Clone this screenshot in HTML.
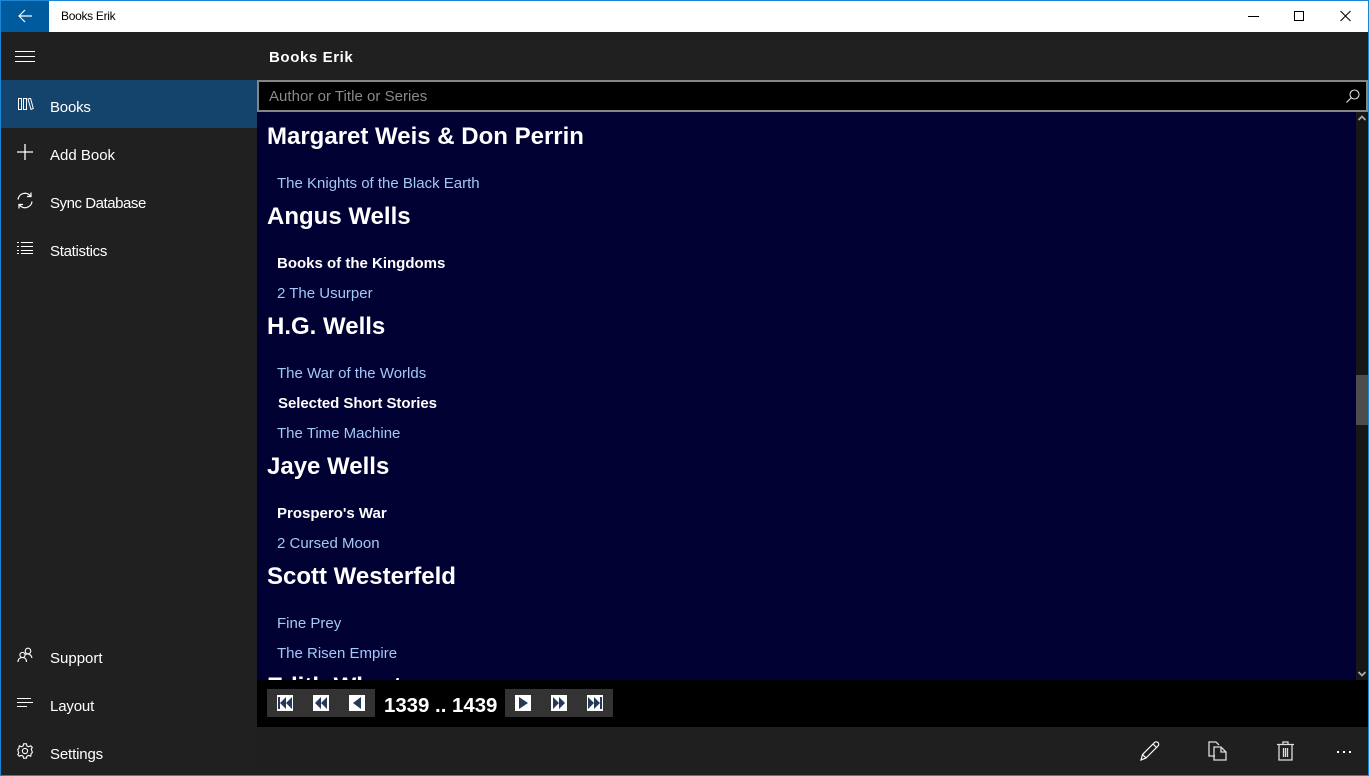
<!DOCTYPE html>
<html><head><meta charset="utf-8"><style>
html,body{margin:0;padding:0;width:1369px;height:776px;overflow:hidden;background:#202020}
body{position:relative;font-family:"Liberation Sans",sans-serif;color:#fff}
div,span,svg{position:absolute;white-space:nowrap}
.nav{font-size:15px;left:50px;color:#fff;line-height:20px}
.h{left:267px;font-weight:bold;font-size:24px;line-height:30px;color:#fff}
.l{left:277px;font-size:15px;line-height:20px;color:#a3c9f7}
.b{left:277px;font-weight:bold;font-size:15px;line-height:20px;color:#fff}
.pb{top:695px;width:16px;height:16px;background:#fff}
svg{fill:none;stroke:#fff}
</style></head><body>
<div style="left:0;top:0;width:1369px;height:32px;background:#fff"></div>
<div style="left:1px;top:1px;width:48px;height:31px;background:#005a9e"></div>
<svg style="left:17px;top:8px" width="16" height="16" viewBox="0 0 16 16" stroke-width="1.2"><path d="M2 8H15M8 2L2 8L8 14"/></svg>
<div style="left:61px;top:8px;font-size:12px;line-height:16px;color:#000;letter-spacing:-.3px">Books Erik</div>
<svg style="left:1248px;top:10px;stroke:#000" width="12" height="12" stroke-width="1"><path d="M0 6.5H11"/></svg>
<svg style="left:1294px;top:10px;stroke:#000" width="12" height="12" stroke-width="1"><rect x=".5" y="1.5" width="9" height="9"/></svg>
<svg style="left:1340px;top:10px;stroke:#000" width="12" height="12" stroke-width="1"><path d="M.5 1L10.5 11M10.5 1L.5 11"/></svg>

<svg style="left:15px;top:50px" width="20" height="12" stroke-width="1"><path d="M0 1.5H20M0 6.5H20M0 11.5H20"/></svg>
<div style="left:1px;top:80px;width:256px;height:48px;background:#14446b"></div>
<svg style="left:17px;top:98px" width="17" height="13" stroke-width="1"><path d="M1.5 .5H4.5V11.5H1.5ZM6.5 .5H9.5V11.5H6.5ZM11 1L13.5 .2L16.3 10.5L14 11.5Z"/></svg>
<div class="nav" style="top:98px;letter-spacing:-.2px">Books</div>
<svg style="left:17px;top:144px" width="16" height="16" stroke-width="1.3"><path d="M8 0V16M0 8H16"/></svg>
<div class="nav" style="top:146px">Add Book</div>
<svg style="left:17px;top:192px" width="16" height="17" stroke-width="1.2"><path d="M1 7.5A7 7 0 0 1 13.5 4M15 9.5A7 7 0 0 1 2.5 13M14 .5V4.5H10M2 16.5V12.5H6"/></svg>
<div class="nav" style="top:194px;letter-spacing:-.45px">Sync Database</div>
<svg style="left:17px;top:241px" width="17" height="14" stroke-width="1"><path d="M4 1.5H16M4 5.5H16M4 9.5H16M4 12.5H16M0 1.5H2M0 5.5H2M0 9.5H2M0 12.5H2"/></svg>
<div class="nav" style="top:242px;letter-spacing:-.3px">Statistics</div>
<svg style="left:17px;top:647px" width="16" height="16" stroke-width="1.1"><circle cx="5.5" cy="8" r="2.6"/><circle cx="11" cy="4" r="2.8"/><path d="M1 15C1 11.5 3.5 10.5 5.5 10.5C7.5 10.5 9.5 11.5 9.5 15M8 7.5C10 6.5 14 6.5 15 11"/></svg>
<div class="nav" style="top:649px">Support</div>
<svg style="left:17px;top:697px" width="17" height="12" stroke-width="1"><path d="M0 1.5H14M0 5.5H16M0 9.5H10"/></svg>
<div class="nav" style="top:697px;letter-spacing:-.15px">Layout</div>
<svg style="left:17px;top:743px" width="16" height="16" stroke-width="1.1"><circle cx="8" cy="8" r="2.6"/><path d="M6.6 .8H9.4L9.9 3L11.8 3.8L13.6 2.7L15.3 4.5L14.2 6.3L15 8L15.3 9.7L14.2 10.6L13.7 13.3L11.8 12.4L9.9 13.2L9.4 15.2H6.6L6.1 13.2L4.2 12.4L2.3 13.3L.8 11.6L1.8 9.8L1.1 8L.8 6.3L1.8 5.5L2.4 2.7L4.2 3.8L6.1 3Z"/></svg>
<div class="nav" style="top:745px;letter-spacing:-.15px">Settings</div>

<div style="left:269px;top:48px;font-size:15px;line-height:20px;font-weight:bold;letter-spacing:.6px">Books Erik</div>

<div style="left:257px;top:112px;width:1099px;height:568px;background:#000033;overflow:hidden"></div>
<div style="left:1356px;top:112px;width:12px;height:568px;background:#171717"></div>
<div style="left:1356px;top:375px;width:12px;height:50px;background:#4d4d4d"></div>
<svg style="left:1358px;top:115px;stroke:#aaa" width="8" height="6" stroke-width="1.8"><path d="M.5 5L4 1.5L7.5 5"/></svg>
<svg style="left:1358px;top:671px;stroke:#aaa" width="8" height="6" stroke-width="1.8"><path d="M.5 1L4 4.5L7.5 1"/></svg>

<div class="h" style="top:122px">Margaret Weis &amp; Don Perrin</div>
<div class="l" style="top:174px">The Knights of the Black Earth</div>
<div class="h" style="top:202px">Angus Wells</div>
<div class="b" style="top:254px">Books of the Kingdoms</div>
<div class="l" style="top:284px">2 The Usurper</div>
<div class="h" style="top:312px">H.G. Wells</div>
<div class="l" style="top:364px">The War of the Worlds</div>
<div class="b" style="top:394px;left:278px;letter-spacing:-.05px">Selected Short Stories</div>
<div class="l" style="top:424px">The Time Machine</div>
<div class="h" style="top:452px">Jaye Wells</div>
<div class="b" style="top:504px">Prospero's War</div>
<div class="l" style="top:534px">2 Cursed Moon</div>
<div class="h" style="top:562px">Scott Westerfeld</div>
<div class="l" style="top:614px">Fine Prey</div>
<div class="l" style="top:644px">The Risen Empire</div>
<div class="h" style="top:672px">Edith Wharton</div>

<div style="left:257px;top:680px;width:1099px;height:47px;background:#000"></div>
<div style="left:1356px;top:680px;width:12px;height:47px;background:#000"></div>
<div style="left:267px;top:689px;width:108px;height:28px;background:#333"></div>
<div style="left:505px;top:689px;width:108px;height:28px;background:#333"></div>
<div class="pb" style="left:277px"></div><div class="pb" style="left:313px"></div><div class="pb" style="left:349px"></div>
<div class="pb" style="left:515px"></div><div class="pb" style="left:551px"></div><div class="pb" style="left:587px"></div>
<svg style="left:277px;top:695px;fill:#263a55;stroke:none" width="16" height="16"><path d="M1 2H3V14H1ZM9 2V14L3 8ZM15 2V14L9 8Z"/></svg>
<svg style="left:313px;top:695px;fill:#263a55;stroke:none" width="16" height="16"><path d="M8 2V14L2 8ZM14 2V14L8 8Z"/></svg>
<svg style="left:349px;top:695px;fill:#263a55;stroke:none" width="16" height="16"><path d="M12 2V14L4 8Z"/></svg>
<svg style="left:515px;top:695px;fill:#263a55;stroke:none" width="16" height="16"><path d="M4 2V14L13 8Z"/></svg>
<svg style="left:551px;top:695px;fill:#263a55;stroke:none" width="16" height="16"><path d="M2 2V14L8 8ZM8 2V14L14 8Z"/></svg>
<svg style="left:587px;top:695px;fill:#263a55;stroke:none" width="16" height="16"><path d="M1 2V14L7 8ZM7 2V14L13 8ZM13 2H15V14H13Z"/></svg>
<div style="left:384px;top:693px;font-size:20.4px;line-height:26px;font-weight:bold">1339 .. 1439</div>

<div style="left:257px;top:727px;width:1111px;height:48px;background:#1f1f1f"></div>
<svg style="left:1140px;top:741px" width="20" height="20" stroke-width="1.2"><path d="M1 19L2.5 13.5L14.5 1.5C15.5 .6 17 .6 18 1.5C19 2.5 19 4 18 5L6 17ZM2.5 13.5L6 17M13 3L16.5 6.5"/></svg>
<svg style="left:1208px;top:741px;stroke:#ddd" width="20" height="20" stroke-width="1.3"><path d="M7 15H1V1H8L11 4M6 6H13L18 11V19H6ZM13 6V11H18"/></svg>
<svg style="left:1276px;top:741px;stroke:#ddd" width="20" height="20" stroke-width="1.3"><path d="M1 3.5H18M7 3V1H12V3M3 4V19H16V4M7.5 7V16M9.5 7V16M11.5 7V16"/></svg>
<svg style="left:1336px;top:750px;fill:#fff;stroke:none" width="16" height="4"><rect x="1" y="1" width="2" height="2"/><rect x="7" y="1" width="2" height="2"/><rect x="13" y="1" width="2" height="2"/></svg>

<div style="left:257px;top:80px;width:1107px;height:28px;background:#000;border:2px solid #858585"></div>
<div style="left:269px;top:87px;font-size:15px;line-height:20px;color:#8a8a8a;letter-spacing:.03px">Author or Title or Series</div>
<svg style="left:1346px;top:89px;stroke:#ddd" width="14" height="14" stroke-width="1.1"><circle cx="8.5" cy="5.5" r="4.5"/><path d="M5.2 8.8L.5 13.5"/></svg>

<div style="left:0;top:0;width:1369px;height:1px;background:#1a86d8"></div>
<div style="left:0;top:775px;width:1369px;height:1px;background:#1a86d8"></div>
<div style="left:0;top:0;width:1px;height:776px;background:#1a86d8"></div>
<div style="left:1368px;top:0;width:1px;height:776px;background:#1a86d8"></div>
</body></html>
